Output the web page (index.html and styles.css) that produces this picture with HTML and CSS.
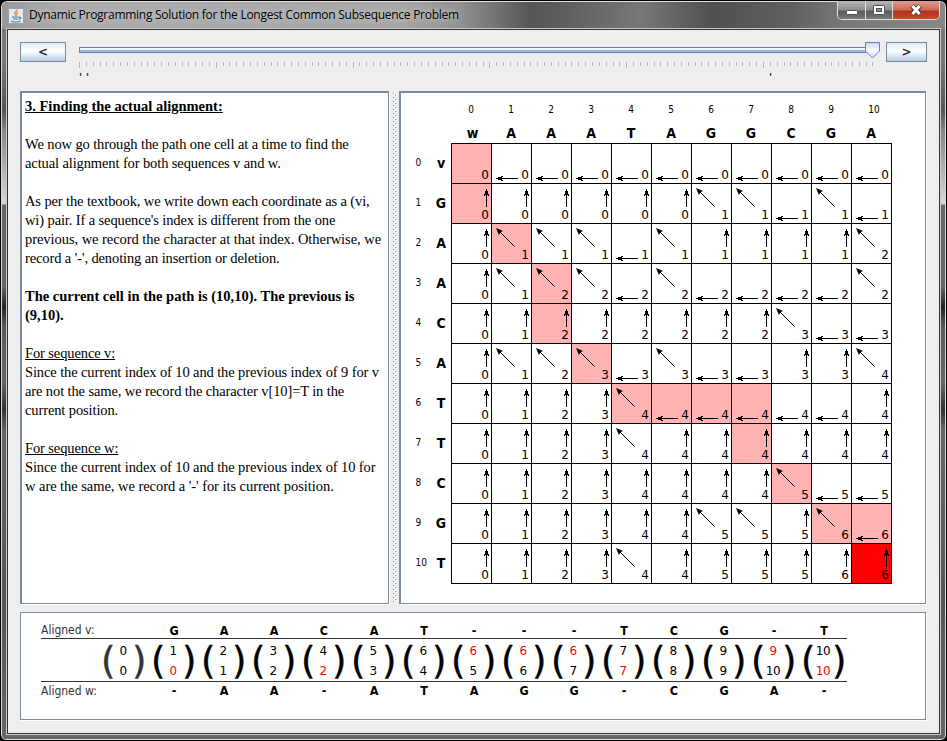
FILE: index.html
```html
<!DOCTYPE html>
<html lang="en">
<head>
<meta charset="utf-8">
<title>Dynamic Programming Solution for the Longest Common Subsequence Problem</title>
<link rel="stylesheet" href="styles.css">
</head>
<body>
<div class="window">
  <header class="titlebar">
    <svg class="app-icon" width="16" height="16" viewBox="0 0 16 16">
      <rect x=".5" y=".5" width="15" height="15" rx="1" fill="#e4ebf1" stroke="#8ba2b5"/>
      <path d="M8.800 1.500c1 1.600-2.800 2.600-2.200 4.200.2.700 1 1.100 1.100 2M10 3.800C7.800 4.800 9.900 6.200 8.500 7.500" fill="none" stroke="#ee7d1c" stroke-width="1.2"/>
      <path d="M4 9h7M5 11h5M11 9.300c2.500-.6 2 1.700-.2 2M3 13.300c2 1 7 1 9.500-.2" fill="none" stroke="#4d7695" stroke-width="1.1"/>
    </svg>
    <h1 class="title">Dynamic Programming Solution for the Longest Common Subsequence Problem</h1>
    <div class="controls">
      <span class="ctl min"><svg width="28" height="17" viewBox="0 0 28 17"><rect x="8.500" y="9.500" width="11" height="4" rx="1" fill="#fff" stroke="#4b4f5c"/></svg></span>
      <span class="ctl max"><svg width="26" height="17" viewBox="0 0 26 17"><rect x="7.500" y="4.500" width="11" height="9" rx="1" fill="#fff" stroke="#4b4f5c"/><rect x="10.500" y="7.500" width="5" height="3" fill="#8b8b8b" stroke="#4b4f5c"/></svg></span>
      <span class="ctl close"><svg width="46" height="17" viewBox="0 0 46 17"><path d="M19 5l8 8M27 5l-8 8" stroke="#5b3a3d" stroke-width="5"/><path d="M19.500 5l7 8M26.500 5l-7 8" stroke="#fff" stroke-width="2.900"/></svg></span>
    </div>
  </header>
  <main class="client">
    <div class="toolbar">
      <button class="btn prev">&lt;</button>
      <div class="slider">
        <div class="track"></div>
        <svg class="thumb" width="15" height="17" viewBox="0 0 15 17">
          <defs><linearGradient id="tg" x1="0" y1="0" x2="0" y2="1"><stop offset="0" stop-color="#c4d5f0"/><stop offset=".5" stop-color="#fff"/><stop offset="1" stop-color="#cddcf2"/></linearGradient></defs>
          <path d="M.5 .5h14v8.500l-7 7-7-7z" fill="url(#tg)" stroke="#5f82c8"/>
        </svg>
        <svg class="ticks" id="ticks" width="796" height="6"></svg>
        <div class="marks"><span>'</span><span>'</span><span class="far">'</span></div>
      </div>
      <button class="btn next">&gt;</button>
    </div>
    <div class="split">
      <section class="panel notes">
        <p><b><u>3. Finding the actual alignment:</u></b></p>
        <p>We now go through the path one cell at a time to find the<br>actual alignment for both sequences v and w.</p>
        <p>As per the textbook, we write down each coordinate as a (vi,<br>wi) pair. If a sequence's index is different from the one<br><span class="loose">previous, we record the character at that index. Otherwise, we</span><br>record a '-', denoting an insertion or deletion.</p>
        <p><b>The current cell in the path is (10,10). The previous is<br>(9,10).</b></p>
        <p><u>For sequence v:</u><br>Since the current index of 10 and the previous index of 9 for v<br>are not the same, we record the character v[10]=T in the<br>current position.</p>
        <p><u>For sequence w:</u><br>Since the current index of 10 and the previous index of 10 for<br><span class="loose">w are the same, we record a '-' for its current position.</span></p>
      </section>
      <svg class="divider" width="10" height="513">
        <defs><pattern id="dots" x="4" y="2" width="4" height="4" patternUnits="userSpaceOnUse"><path d="M0 0h1v1h-1zM2 2h1v1h-1z" fill="#8493a3"/><path d="M1 1h1v1h-1zM3 3h1v1h-1z" fill="#fff"/></pattern></defs>
        <rect x="4" y="2" width="4" height="510" fill="url(#dots)"/>
      </svg>
      <section class="panel matrix">
        <div class="col-idx" id="colIdx"></div>
        <div class="col-chr" id="colChr"></div>
        <div class="body">
          <div class="row-idx" id="rowIdx"></div>
          <div class="row-chr" id="rowChr"></div>
          <div class="grid" id="grid"></div>
        </div>
      </section>
    </div>
    <section class="panel aligned">
      <div class="seq top"><span class="label">Aligned v:</span><div class="letters" id="vLetters"></div></div>
      <div class="pairs" id="pairs"></div>
      <div class="seq bottom"><span class="label">Aligned w:</span><div class="letters" id="wLetters"></div></div>
    </section>
  </main>
</div>
<script src="script.js"></script>
</body>
</html>
```
FILE: styles.css
```css
* { box-sizing: border-box; }
body { margin: 0; background: #000; font-family: "DejaVu Sans Condensed", "DejaVu Sans", sans-serif; font-stretch: condensed; color: #000; }
.window {
  width: 947px; height: 741px; overflow: hidden;
  display: flex; flex-direction: column;
  border: 1px solid #000; border-radius: 7px 7px 6px 6px;
  padding: 0 6px 6px;
  box-shadow: inset 0 0 0 1px #dcdcdc;
  background: linear-gradient(180deg, #777 0, #777 60px, #555 110px, #8c8584 130px, #d8d2d2 200px, #d8d2d2 203px, #666 204px, #666 285px, #222 306px, #5c5858 325px, #666 380px, #333 408px, #666 430px, #555 600px, #666 100%);
}
.titlebar {
  height: 27px; margin: 1px -5px 0; padding: 0 5px 0 6px; flex: none;
  display: flex; border-radius: 6px 6px 0 0;
  background: linear-gradient(90deg, #999 0, #aaa 60px, #a6a6a6 400px, #8f8f8f 460px, #555 530px, #777 640px, #505050 710px, #606060 790px, #777 840px, #888 100%);
}
.app-icon { margin-top: 6px; flex: none; }
.title { margin: 4px 0 0 5px; font: 400 12px/18px "Open Sans", sans-serif; letter-spacing: -.27px; white-space: nowrap; text-shadow: 0 0 6px #ccc, 0 0 9px #ccc; flex: 1; }
.controls { display: flex; height: 19px; border: 1px solid #ddd; border-top: 0; border-radius: 0 0 5px 5px; overflow: hidden; margin-top: -1px; flex: none; width: 103px; }
.ctl { display: block; background: linear-gradient(#b5b5b5, #8d8d8d 48%, #575757 52%, #7f7f7f); border-right: 1px solid #ddd; height: 19px; }
.ctl svg { display: block; }
.min { width: 28px; } .max { width: 27px; }
.close { flex: 1; border: 0; background: linear-gradient(#dc9a8c, #cc6b57 48%, #b3301b 52%, #cb4d30); }
.client { flex: 1; margin: 0; background: #eee; border: 1px solid #333; outline: 1px solid #ccc; padding: 12px 12px 0; min-height: 0; }
.toolbar { display: flex; height: 49px; }
.btn { height: 20px; padding: 0 0 1px; border: 1px solid #7a8a99; background: linear-gradient(#dce8f3, #fff 45%, #b8cfe5); font: 700 12px/16px "DejaVu Sans", sans-serif; color: #333; flex: none; }
.prev { width: 46px; } .next { width: 41px; }
.slider { position: relative; width: 796px; margin: 0 11px 0 13px; flex: none; }
.track { margin-top: 5px; height: 6px; border: 1px solid #6382bf; background: linear-gradient(#fff, #dfe9f5 50%, #a3b8d8 51%, #a3b8d8); }
.thumb { position: absolute; left: 786px; top: 0; }
.ticks { display: block; margin-top: 9px; }
.marks { height: 12px; font: 700 11px/12px "DejaVu Sans Condensed", sans-serif; color: #222; margin-top: 4px; display: flex; gap: 3px; }
.marks span { width: 4px; }
.marks .far { margin-left: 676px; }
.split { display: flex; height: 513px; }
.panel { background: #fff; border: solid #7a8a99; border-width: 2px 1px 1px 2px; box-shadow: 1px 1px 0 #fff; flex: none; }
.notes { width: 369px; padding: 4px 0 0 3px; font: 14.500px/19px "Liberation Serif", serif; letter-spacing: -.115px; white-space: nowrap; overflow: hidden; }
.notes b { letter-spacing: 0; }
.notes .loose { letter-spacing: -.05px; }
.notes p { margin: 0 0 19px; }
.divider { flex: none; }
.matrix { width: 527px; padding: 11px 0 0 10px; }
.col-idx, .col-chr { display: flex; margin-left: 40px; }
.col-idx span, .col-chr span { width: 40px; text-align: center; }
.col-idx { font-size: 10px; line-height: 12px; height: 12px; }
.col-idx span:last-child { padding-left: 6px; }
.col-chr { font-size: 14px; line-height: 16px; font-weight: 700; margin-top: 9px; height: 18px; }
.col-chr span:first-child { padding-left: 3px; }
.body { display: flex; }
.row-idx span, .row-chr span { display: block; height: 40px; line-height: 40px; }
.row-idx { width: 20px; font-size: 10px; padding-left: 4.500px; white-space: nowrap; }
.row-chr { width: 20px; font-size: 14px; font-weight: 700; text-align: center; }
.grid { display: grid; grid-template-columns: repeat(11, 40px); grid-auto-rows: 40px; width: 441px; height: 441px; border: solid #000; border-width: 1px 0 0 1px; }
.cell { display: grid; border: solid #000; border-width: 0 1px 1px 0; font: 12px/14px "DejaVu Sans", sans-serif; font-stretch: normal; }
.cell > * { grid-area: 1 / 1; }
.cell span { place-self: end; margin: 0 2px 1px 0; }
.path { background: #ffb3b3; }
.current { background: #f00; }
.aligned { width: 906px; height: 108px; margin-top: 8px; border-width: 1px; padding: 10px 0 0 20px; font-size: 12px; }
.seq { display: flex; width: 806px; height: 16px; line-height: 15px; }
.top { border-bottom: 1px solid #333; }
.bottom { border-top: 1px solid #333; height: 18px; line-height: 18px; }
.label { width: 108px; flex: none; color: #333; font-size: 12px; white-space: nowrap; }
.letters { display: flex; flex: none; font-weight: 700; font-size: 12.500px; }
.letters span { width: 50px; flex: none; text-align: center; }
.pairs { display: flex; height: 42px; margin-left: 57px; }
.pair { width: 50px; height: 42px; display: grid; grid-template-columns: 14px 22px 14px; align-items: start; }
.paren { font: 37px/42px "DejaVu Sans", sans-serif; font-stretch: normal; height: 40px; width: 14px; margin: 2px 0 0 3px; -webkit-text-stroke: .4px; }
.paren:last-child { margin-left: -2px; }
.nums { display: flex; flex-direction: column; font: 12px/20px "DejaVu Sans", sans-serif; font-stretch: normal; letter-spacing: -.4px; text-align: center; margin-top: 2px; }
.start .paren { color: #333; }
.red { color: #f00; }
```
FILE: script.js
```js
const W = 'wAAATAGGCGA', V = 'vGAACATTCGT';
const SVG = 'shape-rendering="crispEdges"';

// Each cell: direction of the backpointer (U, L, D or -) and the LCS length.
const rows = [
  '-0 L0 L0 L0 L0 L0 L0 L0 L0 L0 L0',
  'U0 U0 U0 U0 U0 U0 D1 D1 L1 D1 L1',
  'U0 D1 D1 D1 L1 D1 U1 U1 U1 U1 D2',
  'U0 D1 D2 D2 L2 D2 L2 L2 L2 L2 D2',
  'U0 U1 U2 U2 U2 U2 U2 U2 D3 L3 L3',
  'U0 D1 D2 D3 L3 D3 L3 L3 U3 U3 D4',
  'U0 U1 U2 U3 D4 L4 L4 L4 L4 L4 U4',
  'U0 U1 U2 U3 D4 U4 U4 U4 U4 U4 U4',
  'U0 U1 U2 U3 U4 U4 U4 U4 D5 L5 L5',
  'U0 U1 U2 U3 U4 U4 D5 D5 U5 D6 L6',
  'U0 U1 U2 U3 D4 U4 U5 U5 U5 U6 U6'
];
const path = ['0,0','1,0','2,1','3,2','4,2','5,3','6,4','6,5','6,6','6,7','7,7','8,8','9,9','9,10'];
const arrows = {
  '-': '',
  U: `<path ${SVG} d="M34 5h1v18h-1zM33 7h3v3h-3zM32 10h5v1h-5zM32 11h1v1h-1zM36 11h1v1h-1z"/>`,
  L: `<path ${SVG} d="M4 34h22v1h-22zM6 33h3v3h-3zM9 32h1v5h-1zM10 32h1v1h-1zM10 36h1v1h-1z"/>`,
  D: '<path d="M5 5l17.500 17.500" stroke="#000" stroke-width="1"/><path d="M4 4l7 3-2 1-1 1-1 2z"/>'
};
const el = id => document.getElementById(id);
const spans = list => list.map(s => `<span>${s}</span>`).join('');

el('colIdx').innerHTML = el('rowIdx').innerHTML = spans([...W].map((_, i) => i));
el('colChr').innerHTML = spans([...W]);
el('rowChr').innerHTML = spans([...V]);
el('grid').innerHTML = rows.map((r, i) => r.split(' ').map((c, j) => {
  const cls = i === 10 && j === 10 ? ' current' : path.includes(i + ',' + j) ? ' path' : '';
  return `<div class="cell${cls}"><svg width="39" height="39">${arrows[c[0]]}</svg><span>${c[1]}</span></div>`;
}).join('')).join('');

let ticks = '';
for (let i = 0; i <= 116; i++) {
  ticks += `<rect x="${Math.round(i * 6.84)}" y="0" width="1" height="${i % 20 ? 4 : 6}" fill="#a3b8cc"/>`;
}
el('ticks').innerHTML = ticks;

const va = 'GAACAT---TCG-T', wa = '-AA-ATAGG-CGA-';
el('vLetters').innerHTML = spans([...va]);
el('wLetters').innerHTML = spans([...wa]);
let a = 0, b = 0, html = '';
for (let i = -1; i < va.length; i++) {
  const ra = i >= 0 && va[i] === '-', rb = i >= 0 && wa[i] === '-';
  if (i >= 0 && !ra) a++;
  if (i >= 0 && !rb) b++;
  html += `<div class="pair${i < 0 ? ' start' : ''}"><span class="paren">(</span><div class="nums"><span class="${ra ? 'red' : ''}">${a}</span><span class="${rb ? 'red' : ''}">${b}</span></div><span class="paren">)</span></div>`;
}
el('pairs').innerHTML = html;
```
